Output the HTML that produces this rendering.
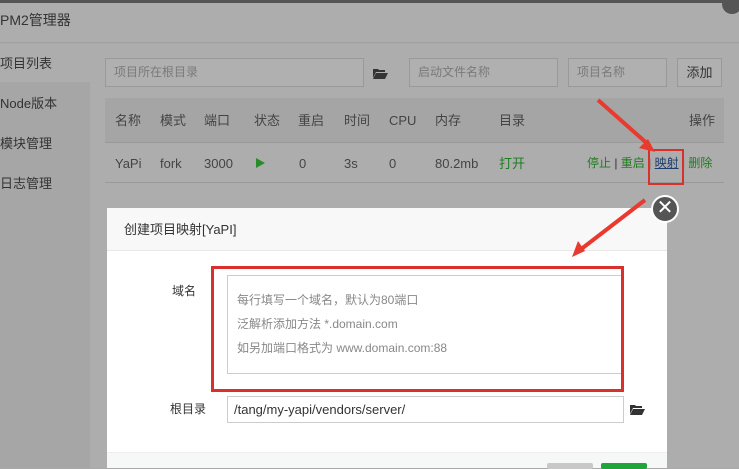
<!DOCTYPE html>
<html><head><meta charset="utf-8"><style>
*{margin:0;padding:0;box-sizing:border-box}
body{width:739px;height:468px;overflow:hidden;position:relative;background:#a9a9a9;font-family:"Liberation Sans","Noto Sans CJK SC",sans-serif;font-size:13px;color:#333}
.abs{position:absolute;line-height:1.2}
.inp{position:absolute;border:1px solid #999;background:#b0b0b0;height:29px;color:#7a7a7a;font-size:12px;padding:0 8px;line-height:27px}
.h{color:#444;font-size:13px}
</style></head><body>
<div class="abs" style="left:0;top:0;width:739px;height:3px;background:#555"></div>
<div class="abs" style="left:0;top:3px;width:739px;height:40px;background:#adadad;border-bottom:1px solid #a0a0a0"></div>
<div class="abs" style="left:0;top:12px;font-size:14px;color:#333">PM2管理器</div>
<div class="abs" style="left:722px;top:-6px;width:20px;height:20px;border-radius:50%;background:#555"></div>
<div class="abs" style="left:0;top:44px;width:90px;height:424px;background:#a6a6a6"></div>
<div class="abs" style="left:0;top:44px;width:90px;height:38px;background:#adadad"></div>
<div class="abs" style="left:0;top:56px;color:#333">项目列表</div>
<div class="abs" style="left:0;top:96px;color:#333">Node版本</div>
<div class="abs" style="left:0;top:136px;color:#333">模块管理</div>
<div class="abs" style="left:0;top:176px;color:#333">日志管理</div>
<div class="abs" style="left:90px;top:44px;width:649px;height:424px;background:#adadad"></div>
<div class="inp" style="left:105px;top:58px;width:259px">项目所在根目录</div>
<svg class="abs" style="left:373px;top:68px" width="15" height="11"><path d="M0 1h5l1 1h6v2H3L0 10z" fill="#333"/><path d="M3 5h12l-3 6H0z" fill="#333"/></svg>
<div class="inp" style="left:409px;top:58px;width:149px">启动文件名称</div>
<div class="inp" style="left:568px;top:58px;width:99px">项目名称</div>
<div class="inp" style="left:677px;top:58px;width:45px;color:#333;text-align:center;padding:0;font-size:13px">添加</div>
<div class="abs" style="left:105px;top:98px;width:619px;height:45px;background:#a5a5a5;border-bottom:1px solid #999"></div>
<div class="abs h" style="left:115px;top:113px">名称</div>
<div class="abs h" style="left:160px;top:113px">模式</div>
<div class="abs h" style="left:204px;top:113px">端口</div>
<div class="abs h" style="left:254px;top:113px">状态</div>
<div class="abs h" style="left:298px;top:113px">重启</div>
<div class="abs h" style="left:344px;top:113px">时间</div>
<div class="abs h" style="left:389px;top:113px">CPU</div>
<div class="abs h" style="left:435px;top:113px">内存</div>
<div class="abs h" style="left:499px;top:113px">目录</div>
<div class="abs h" style="left:689px;top:113px">操作</div>
<div class="abs" style="left:105px;top:182px;width:619px;height:1px;background:#999"></div>
<div class="abs h" style="left:115px;top:156px">YaPi</div>
<div class="abs h" style="left:160px;top:156px">fork</div>
<div class="abs h" style="left:204px;top:156px">3000</div>
<div class="abs" style="left:256px;top:158px;width:0;height:0;border-left:9px solid #2b8a2b;border-top:5px solid transparent;border-bottom:5px solid transparent"></div>
<div class="abs h" style="left:299px;top:156px">0</div>
<div class="abs h" style="left:344px;top:156px">3s</div>
<div class="abs h" style="left:389px;top:156px">0</div>
<div class="abs h" style="left:435px;top:156px">80.2mb</div>
<div class="abs" style="left:499px;top:156px;color:#1f7d1f">打开</div>
<div class="abs" style="left:587px;top:156px;color:#1f7d1f;font-size:12px;white-space:nowrap">停止 <span style="color:#333">|</span> 重启 <span style="color:#333">|</span> <span style="color:#1f3d6d;text-decoration:underline">映射</span> <span style="color:#333">|</span> 删除</div>
<div class="abs" style="left:648px;top:149px;width:36px;height:36px;border:2px solid #d9302c"></div>
<div class="abs" style="left:107px;top:208px;width:560px;height:260px;background:#fff"></div>
<div class="abs" style="left:107px;top:208px;width:560px;height:43px;background:#f8f8f8;border-bottom:1px solid #e8e8e8"></div>
<div class="abs" style="left:124px;top:222px;color:#333">创建项目映射[YaPI]</div>
<div class="abs" style="left:107px;top:452px;width:560px;height:16px;background:#f6f8f8;border-top:1px solid #eee"></div>
<div class="abs" style="left:547px;top:463px;width:46px;height:6px;background:#c8c8c8;border-radius:2px"></div>
<div class="abs" style="left:601px;top:463px;width:46px;height:6px;background:#20a53a;border-radius:2px"></div>
<svg class="abs" style="left:0;top:0" width="739" height="468">
<path d="M598 100L650 146" stroke="#e83a2f" stroke-width="4"/><path d="M655 152l-16-4 9-9z" fill="#e83a2f"/>
<path d="M645 200L580 250" stroke="#e83a2f" stroke-width="4"/><path d="M572 257l6-16 7 10z" fill="#e83a2f"/>
</svg>
<div class="abs" style="left:651px;top:195px;width:28px;height:28px;border-radius:50%;background:#555;border:2px solid #fff;color:#fff;text-align:center;font-size:20px;line-height:23px">✕</div>
<div class="abs" style="left:172px;top:284px;color:#333;font-size:12px">域名</div>
<div class="abs" style="left:227px;top:275px;width:396px;height:99px;border:1px solid #ccc"></div>
<div class="abs" style="left:237px;top:288px;color:#888;font-size:12px;line-height:24px">每行填写一个域名，默认为80端口<br>泛解析添加方法 *.domain.com<br>如另加端口格式为 www.domain.com:88</div>
<div class="abs" style="left:211px;top:266px;width:413px;height:126px;border:3px solid #d9302c"></div>
<div class="abs" style="left:170px;top:402px;color:#333;font-size:12px">根目录</div>
<div class="abs" style="left:227px;top:396px;width:397px;height:27px;border:1px solid #ccc;padding:0 6px;line-height:25px;color:#333;font-size:13px">/tang/my-yapi/vendors/server/</div>
<svg class="abs" style="left:630px;top:404px" width="15" height="11"><path d="M0 1h5l1 1h6v2H3L0 10z" fill="#333"/><path d="M3 5h12l-3 6H0z" fill="#333"/></svg>
</body></html>
